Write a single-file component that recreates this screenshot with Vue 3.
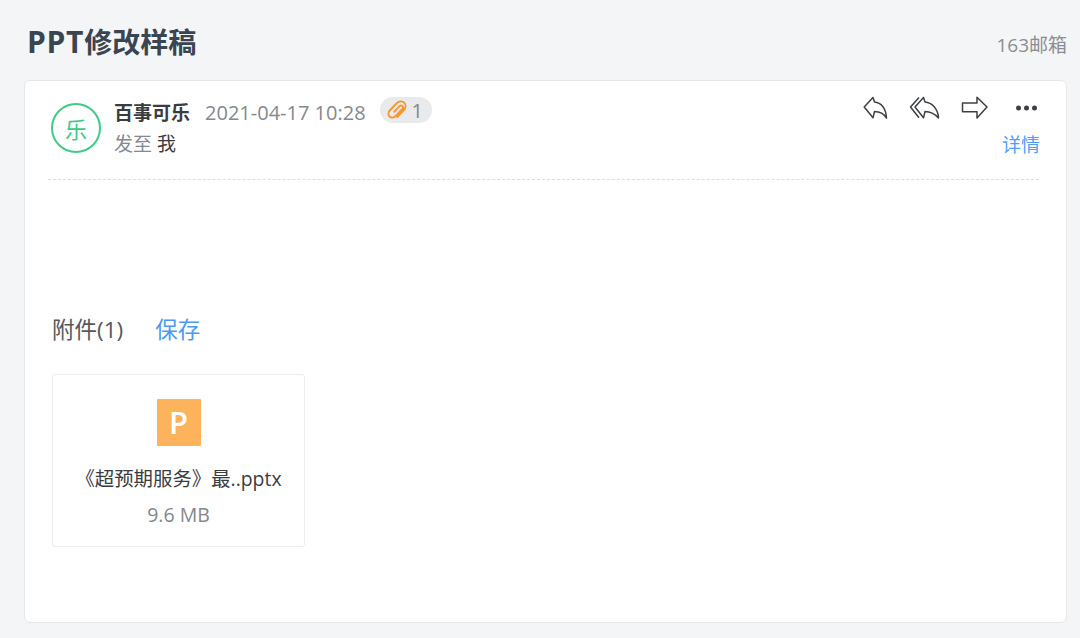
<template>
  <div class="page">
    <div class="top">
      <h1><span class="latin">PPT</span>修改样稿</h1>
      <span class="brand">163邮箱</span>
    </div>
    <div class="card">
      <div class="head">
        <div class="avatar">乐</div>
        <div class="meta">
          <div class="line1">
            <span class="sender">百事可乐</span>
            <span class="date">2021-04-17 10:28</span>
            <span class="clip">
              <svg width="22" height="22" viewBox="0 0 22 22" fill="none" stroke="#f7962f" stroke-width="1.9" stroke-linecap="round" stroke-linejoin="round">
                <path d="M8.200 12.800l5.300-5.600c.8-.9 2.100-.9 2.900-.1.800.8.800 2 0 2.900l-6.900 7.200c-1.700 1.800-4.300 1.900-5.900.3-1.600-1.600-1.500-4.200.2-6l7-7.300c2.200-2.300 5.500-2.400 7.400-.5 1.900 1.900 1.800 5.100-.4 7.400l-6.600 6.900" />
              </svg>
              <span>1</span>
            </span>
          </div>
          <div class="line2"><span class="to">发至</span> 我</div>
        </div>
        <div class="actions">
          <div class="icons">
            <svg width="26" height="24" viewBox="0 0 26 24" fill="none" stroke="#3c4045" stroke-width="1.5" stroke-linejoin="round">
              <path d="M10 1.500L1.200 11 10 21.800l1.500-6.300c4.500 0 9 1.500 12 6.500-.5-10-5.500-15.500-12-16z" />
            </svg>
            <svg width="32" height="24" viewBox="0 0 32 24" fill="none" stroke="#3c4045" stroke-width="1.5" stroke-linejoin="round">
              <path d="M10 1.500L1.500 11 10 21.800" />
              <path d="M14.500 1.500L6 11l8.500 10.800 1.500-6.300c4.500 0 9 1.500 13.500 6.500-.5-10-7-15.500-13.500-16z" />
            </svg>
            <svg width="28" height="24" viewBox="0 0 28 24" fill="none" stroke="#3c4045" stroke-width="1.5" stroke-linejoin="round">
              <path d="M16 1.200L26 11 16 22v-6.300H1.500V7H16z" />
            </svg>
            <svg class="more" width="24" height="24" viewBox="0 0 24 24" fill="#3c4045">
              <circle cx="4.500" cy="12" r="2.500" />
              <circle cx="12.500" cy="12" r="2.500" />
              <circle cx="20.500" cy="12" r="2.500" />
            </svg>
          </div>
          <a class="detail">详情</a>
        </div>
      </div>
      <div class="attach-title">
        <span>附件(1)</span>
        <a class="save">保存</a>
      </div>
      <div class="file">
        <div class="ppt">P</div>
        <div class="name">《超预期服务》最..pptx</div>
        <div class="size">9.6 MB</div>
      </div>
    </div>
  </div>
</template>

<script setup>
</script>

<style>
html, body {
  margin: 0;
  background: #f4f5f7;
}
</style>

<style scoped>
.page {
  width: 1080px;
  height: 638px;
  box-sizing: border-box;
  padding: 0 13px 15px 24px;
  background: #f4f5f7;
  font-family: "Open Sans", "Noto Sans CJK SC", sans-serif;
  display: flex;
  flex-direction: column;
  overflow: hidden;
}
.top {
  height: 80px;
  display: flex;
  justify-content: space-between;
  align-items: flex-start;
  flex: none;
}
h1 {
  margin: 22px 0 0 3px;
  font-size: 28px;
  line-height: 40px;
  font-weight: 700;
  color: #3b4550;
}
.latin {
  font-size: 30px;
  letter-spacing: 0.700px;
}
.brand {
  margin-top: 33px;
  font-size: 19px;
  line-height: 24px;
  color: #8a8d92;
}
.card {
  flex: 1;
  background: #fff;
  border: 1px solid #e6e7e9;
  border-radius: 6px;
  padding: 0 27px;
}
.head {
  height: 98px;
  margin-left: -4px;
  border-bottom: 1px dashed #dcdde0;
  display: flex;
  padding-left: 3px;
}
.avatar {
  width: 46px;
  height: 46px;
  margin-top: 22px;
  border: 2px solid #3ecb85;
  border-radius: 50%;
  color: #3ecb85;
  font-size: 22px;
  display: flex;
  align-items: center;
  justify-content: center;
  flex: none;
}
.meta {
  margin-left: 13px;
  flex: 1;
}
.line1 {
  display: flex;
  align-items: center;
  height: 30px;
  margin-top: 16px;
}
.sender {
  font-size: 19px;
  font-weight: 700;
  color: #3a3c40;
}
.date {
  margin-left: 15px;
  font-size: 20px;
  color: #85888d;
}
.clip {
  margin-left: 14px;
  margin-top: -4px;
  width: 52px;
  height: 26px;
  background: #e9eaec;
  border-radius: 13px;
  display: flex;
  align-items: center;
  padding-left: 6px;
  box-sizing: border-box;
  color: #85888d;
  font-size: 20px;
  gap: 4px;
}
.line2 {
  font-size: 19px;
  line-height: 26px;
  margin-top: 4px;
  color: #3a3c40;
}
.to {
  color: #85888d;
}
.actions {
  width: 190px;
  display: flex;
  flex-direction: column;
  align-items: flex-end;
  margin-right: -1px;
}
.icons {
  display: flex;
  align-items: center;
  margin-top: 15px;
  height: 24px;
  gap: 20px;
  margin-right: 2px;
}
.more {
  margin-left: 5px;
}
.detail {
  margin-top: 12px;
  font-size: 19px;
  line-height: 26px;
  color: #4c9ffa;
}
.attach-title {
  margin-top: 133px;
  display: flex;
  align-items: center;
  height: 30px;
  font-size: 22.500px;
  color: #55585c;
  gap: 32px;
}
.save {
  color: #4c9af0;
}
.file {
  margin-top: 31px;
  width: 253px;
  height: 173px;
  box-sizing: border-box;
  border: 1px solid #eceded;
  border-radius: 3px;
  display: flex;
  flex-direction: column;
  align-items: center;
}
.ppt {
  width: 44px;
  height: 47px;
  margin-top: 24px;
  background: #fdb25c;
  border-radius: 1px;
  color: #fff;
  font-size: 31px;
  font-weight: 600;
  line-height: 47px;
  text-align: center;
}
.name {
  margin-top: 20px;
  font-size: 19.400px;
  line-height: 26px;
  color: #3a3c40;
  white-space: nowrap;
}
.size {
  margin-top: 10px;
  font-size: 19.500px;
  line-height: 26px;
  color: #85888d;
}
</style>
